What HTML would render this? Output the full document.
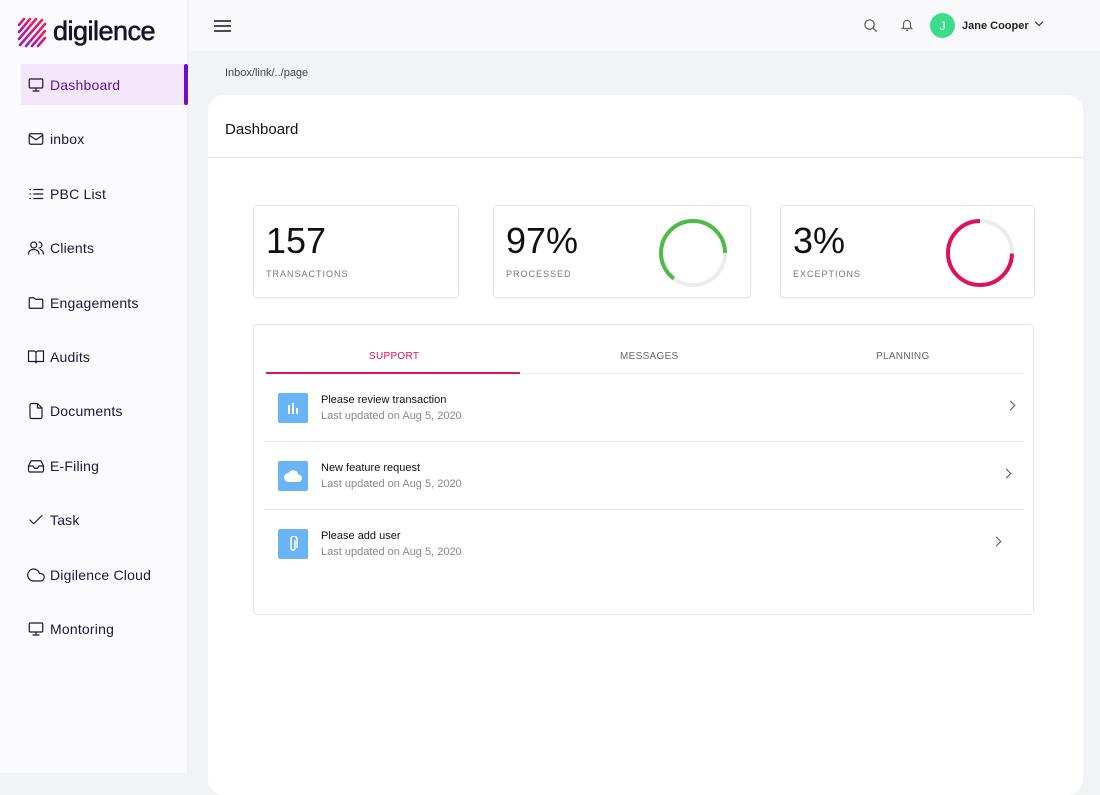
<!DOCTYPE html>
<html><head><style>
*{margin:0;padding:0;box-sizing:border-box}
body{width:1100px;height:773px;overflow:hidden;background:#f2f3f6;font-family:"Liberation Sans",sans-serif;position:relative}
.side{position:absolute;left:0;top:0;width:188px;height:773px;background:#fafaff;border-right:1px solid #ececf2}
.nav{position:absolute;left:21px;width:167px;height:41px;display:flex;align-items:center;padding-left:6px;font-size:14px;color:#1e1538;gap:5px;letter-spacing:.2px}
.nav svg{width:18px;height:18px;fill:none;stroke:#1e1538;stroke-width:1.6;stroke-linecap:round;stroke-linejoin:round}
.nav.act{background:#f4e6fb;color:#5c0fa8}
.nav.act::after{content:"";position:absolute;right:0;top:0;width:4px;height:41px;background:#6a12c0;border-radius:2px}
.top{position:absolute;left:189px;top:0;right:0;height:51px;background:#f9f9fc}
.main{position:absolute;left:208px;top:95px;width:875px;height:700px;background:#fff;border-radius:16px}
.card{position:absolute;top:205px;height:93px;background:#fff;border:1px solid #e6e6ea;border-radius:4px;box-shadow:0 1px 2px rgba(0,0,0,.05)}
.num{position:absolute;left:12px;top:14px;font-size:36px;color:#111}
.lab{position:absolute;left:12px;top:63px;font-size:9px;letter-spacing:1px;color:#777}
.row{position:absolute;left:264px;width:760px;height:68px;border-bottom:1px solid #e6e6e6}
.ic{position:absolute;left:14px;top:19px;width:30px;height:30px;background:#6ab4f5;border-radius:2px;display:flex;align-items:center;justify-content:center}
.t1{position:absolute;left:57px;top:20px;font-size:11px;color:#111}
.t2{position:absolute;left:57px;top:36px;font-size:11px;color:#888}
.chev{position:absolute;top:28px;width:7px;height:7px;border-right:1.5px solid #555;border-top:1.5px solid #555;transform:rotate(45deg)}
</style></head><body>
<div class="side">
<svg style="position:absolute;left:17px;top:17px" width="30" height="32" viewBox="0 0 30 32"><defs><linearGradient id="g" x1="0" y1="0" x2="1" y2="0"><stop offset="0" stop-color="#9b1fb8"/><stop offset="1" stop-color="#f0204a"/></linearGradient></defs><g stroke="url(#g)" stroke-width="2.6" stroke-linecap="round"><line x1="2" y1="8" x2="7" y2="2"/><line x1="2" y1="15" x2="13" y2="2"/><line x1="2" y1="22" x2="19" y2="2"/><line x1="3" y1="28" x2="25" y2="3"/><line x1="9" y1="29" x2="28" y2="7"/><line x1="15" y1="29" x2="28" y2="14"/><line x1="21" y1="29" x2="28" y2="21"/></g></svg>
<div style="position:absolute;left:53px;top:16px;font-size:27px;color:#15142a;letter-spacing:-0.5px;-webkit-text-stroke:0.6px #15142a">digilence</div>
<div class="nav act" style="top:64px"><svg viewBox="0 0 24 24" style="stroke:#1e1538"><rect x="3" y="4" width="18" height="12" rx="1.5"/><path d="M8 20h8M12 16v4"/></svg>Dashboard</div>
<div class="nav" style="top:118px"><svg viewBox="0 0 24 24"><rect x="3" y="5" width="18" height="14" rx="2"/><path d="M3 7l9 6 9-6"/></svg>inbox</div>
<div class="nav" style="top:173px"><svg viewBox="0 0 24 24"><path d="M9 6h12M9 12h12M9 18h12M4 6h.5M4 12h.5M4 18h.5"/></svg>PBC List</div>
<div class="nav" style="top:227px"><svg viewBox="0 0 24 24"><circle cx="9" cy="8" r="4"/><path d="M2 20c0-4 3-6 7-6s7 2 7 6M16 4a4 4 0 010 8M18 14c2 1 4 3 4 6"/></svg>Clients</div>
<div class="nav" style="top:282px"><svg viewBox="0 0 24 24"><path d="M3 6a1 1 0 011-1h5l2 2h9a1 1 0 011 1v10a1 1 0 01-1 1H4a1 1 0 01-1-1z"/></svg>Engagements</div>
<div class="nav" style="top:336px"><svg viewBox="0 0 24 24"><path d="M2 4h7a3 3 0 013 3v13a2 2 0 00-2-2H2zM22 4h-7a3 3 0 00-3 3v13a2 2 0 012-2h8z"/></svg>Audits</div>
<div class="nav" style="top:390px"><svg viewBox="0 0 24 24"><path d="M14 2H6a2 2 0 00-2 2v16a2 2 0 002 2h12a2 2 0 002-2V8zM14 2v6h6"/></svg>Documents</div>
<div class="nav" style="top:445px"><svg viewBox="0 0 24 24"><path d="M22 12h-6l-2 3h-4l-2-3H2M5.5 5h13L22 12v6a2 2 0 01-2 2H4a2 2 0 01-2-2v-6z"/></svg>E-Filing</div>
<div class="nav" style="top:499px"><svg viewBox="0 0 24 24"><path d="M4 12l5 5L20 6"/></svg>Task</div>
<div class="nav" style="top:554px"><svg viewBox="0 0 24 24"><path d="M18 10h-1.3A8 8 0 109 20h9a5 5 0 000-10z"/></svg>Digilence Cloud</div>
<div class="nav" style="top:608px"><svg viewBox="0 0 24 24"><rect x="3" y="4" width="18" height="12" rx="1.5"/><path d="M8 20h8M12 16v4"/></svg>Montoring</div>
</div>
<div class="top">
<svg style="position:absolute;left:25px;top:19px" width="17" height="14" viewBox="0 0 17 14" stroke="#333" stroke-width="1.8"><path d="M0 2h17M0 7h17M0 12h17"/></svg>
<svg style="position:absolute;left:674px;top:18px" width="15" height="15" viewBox="0 0 24 24" fill="none" stroke="#666" stroke-width="2"><circle cx="10.5" cy="10.5" r="7.5"/><path d="M16 16l6 6"/></svg>
<svg style="position:absolute;left:711px;top:17px" width="14" height="16" viewBox="0 0 24 24" fill="none" stroke="#666" stroke-width="2"><path d="M18 16V10a6 6 0 00-12 0v6l-2 2h16zM10 21h4"/></svg>
<div style="position:absolute;left:741px;top:13px;width:25px;height:25px;border-radius:50%;background:#3ddc8c;color:#fff;font-size:12px;display:flex;align-items:center;justify-content:center">J</div>
<div style="position:absolute;left:773px;top:20px;font-size:11px;font-weight:bold;color:#222">Jane Cooper</div>
<div style="position:absolute;left:847px;top:19px;width:6px;height:6px;border-right:1.5px solid #222;border-bottom:1.5px solid #222;transform:rotate(45deg)"></div>
</div>
<div style="position:absolute;left:225px;top:67px;font-size:11px;color:#444">Inbox/link/../page</div>
<div class="main"><div style="position:absolute;left:17px;top:26px;font-size:15px;color:#111">Dashboard</div><div style="position:absolute;left:0;right:0;top:62px;border-top:1px solid #e8e8ec"></div></div>
<div class="card" style="left:253px;width:206px"><div class="num">157</div><div class="lab">TRANSACTIONS</div></div>
<div class="card" style="left:493px;width:258px"><div class="num">97%</div><div class="lab">PROCESSED</div>
<svg style="position:absolute;left:164px;top:12px" width="70" height="70" viewBox="0 0 70 70"><circle cx="35" cy="35" r="32" fill="none" stroke="#ececec" stroke-width="4"/><circle cx="35" cy="35" r="32" fill="none" stroke="#4cbb47" stroke-width="4" stroke-dasharray="130 201" transform="translate(0 70) scale(1 -1)"/></svg></div>
<div class="card" style="left:780px;width:255px"><div class="num">3%</div><div class="lab">EXCEPTIONS</div>
<svg style="position:absolute;left:164px;top:12px" width="70" height="70" viewBox="0 0 70 70"><circle cx="35" cy="35" r="32" fill="none" stroke="#ececec" stroke-width="4"/><circle cx="35" cy="35" r="32" fill="none" stroke="#e0105c" stroke-width="4" stroke-dasharray="150 201" transform="translate(70 0) scale(-1 1) rotate(-90 35 35)"/></svg></div>
<div style="position:absolute;left:253px;top:324px;width:781px;height:291px;background:#fff;border:1px solid #e6e6ea;border-radius:4px"></div>
<div style="position:absolute;left:266px;top:373px;width:758px;border-top:1px solid #eee"></div>
<div style="position:absolute;left:266px;top:372px;width:254px;border-top:2px solid #e0105c"></div>
<div style="position:absolute;left:369px;top:351px;font-size:10px;color:#e0105c;letter-spacing:.3px">SUPPORT</div>
<div style="position:absolute;left:620px;top:351px;font-size:10px;color:#666;letter-spacing:.3px">MESSAGES</div>
<div style="position:absolute;left:876px;top:351px;font-size:10px;color:#666;letter-spacing:.3px">PLANNING</div>
<div class="row" style="top:374px"><div class="ic"><svg width="12" height="12" viewBox="0 0 12 12" fill="#fff"><rect x="1" y="3" width="2" height="9"/><rect x="5" y="1" width="2" height="11"/><rect x="9" y="6" width="2" height="6"/></svg></div><div class="t1">Please review transaction</div><div class="t2">Last updated on Aug 5, 2020</div><div class="chev" style="left:743px"></div></div>
<div class="row" style="top:442px"><div class="ic"><svg width="18" height="12" viewBox="0 0 24 16" fill="#fff"><path d="M19 6a7 7 0 00-13-2A5 5 0 006 16h13a5 5 0 000-10z"/></svg></div><div class="t1">New feature request</div><div class="t2">Last updated on Aug 5, 2020</div><div class="chev" style="left:739px"></div></div>
<div class="row" style="top:510px;border-bottom:none"><div class="ic"><svg width="10" height="16" viewBox="0 0 10 16" fill="none" stroke="#fff" stroke-width="1.5"><path d="M7 4v8a2 2 0 01-4 0V3a3 3 0 016 0v9"/></svg></div><div class="t1">Please add user</div><div class="t2">Last updated on Aug 5, 2020</div><div class="chev" style="left:729px"></div></div>
</body></html>
